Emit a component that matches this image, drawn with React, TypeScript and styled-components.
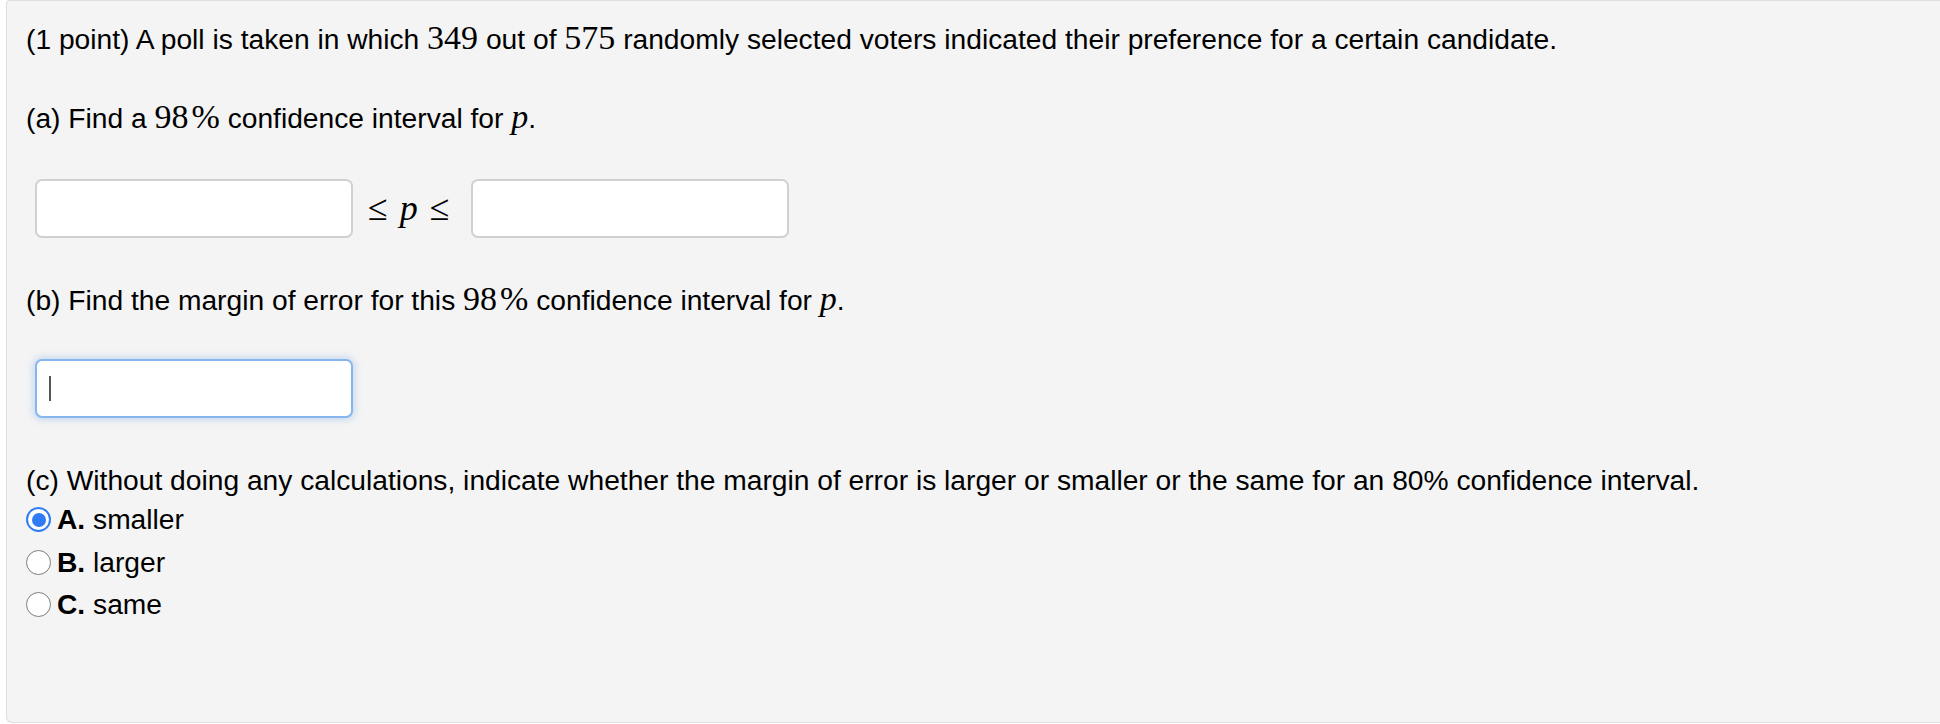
import React from "react";
import styled, { createGlobalStyle } from "styled-components";

const GlobalStyle = createGlobalStyle`
  html, body { margin: 0; padding: 0; background: #ffffff; }
  body { font-family: "Liberation Sans", Arial, Helvetica, sans-serif; color: #000; }
`;

const Page = styled.div`
  padding-left: 6px;
  height: 724px;
  box-sizing: border-box;
  overflow: hidden;
`;

const Panel = styled.div`
  box-sizing: border-box;
  height: 723px;
  background: #f4f4f4;
  border: 1px solid #dedede;
  border-right: none;
  border-radius: 4px 0 0 6px;
  padding: 20px 0 0 19px;
  font-size: 28.2px;
  line-height: 33px;
`;

const Para = styled.div<{ $gap?: number }>`
  margin-bottom: ${(p) => p.$gap ?? 0}px;
  white-space: nowrap;
`;

const Num = styled.span`
  font-family: "Liberation Serif", "Times New Roman", serif;
  font-size: 34px;
  line-height: 33px;
`;

const Pct = styled.span`
  margin-left: 3px;
`;

const Var = styled.span`
  font-family: "Liberation Serif", "Times New Roman", serif;
  font-style: italic;
  font-size: 34px;
  line-height: 33px;
`;

const InputRow = styled.div<{ $gap?: number }>`
  display: flex;
  align-items: center;
  margin-left: 9px;
  margin-bottom: ${(p) => p.$gap ?? 0}px;
`;

const AnswerBox = styled.div<{ $focused?: boolean }>`
  box-sizing: border-box;
  width: 318px;
  height: 59px;
  border-radius: 7px;
  background: #fff;
  border: 2px solid ${(p) => (p.$focused ? "#86b6ec" : "#d0d0d0")};
  box-shadow: ${(p) => (p.$focused ? "0 0 7px 2px rgba(110,165,230,0.35)" : "none")};
  display: flex;
  align-items: center;
  padding-left: 12px;
`;

const Caret = styled.span`
  width: 2px;
  height: 25px;
  background: #555;
`;

const Relation = styled.span`
  font-family: "Liberation Serif", "Times New Roman", serif;
  font-size: 36px;
  padding: 0 21px 0 15px;
  display: flex;
  align-items: center;
  gap: 12px;
`;

const RelVar = styled.span`
  font-style: italic;
`;

const Options = styled.div`
  display: flex;
  flex-direction: column;
`;

const OptionRow = styled.label`
  display: flex;
  align-items: center;
  height: 42.5px;
  gap: 6px;
`;

const Radio = styled.span<{ $checked?: boolean }>`
  box-sizing: border-box;
  width: 25px;
  height: 25px;
  border-radius: 50%;
  background: #fff;
  border: ${(p) => (p.$checked ? "2.5px solid #2f7cf6" : "1.5px solid #7d7d7d")};
  display: flex;
  align-items: center;
  justify-content: center;
  &::after {
    content: "";
    width: 14px;
    height: 14px;
    border-radius: 50%;
    background: ${(p) => (p.$checked ? "#2f7cf6" : "transparent")};
  }
`;

const Letter = styled.b`
  font-weight: 700;
`;

const options = [
  { letter: "A.", text: "smaller", checked: true },
  { letter: "B.", text: "larger", checked: false },
  { letter: "C.", text: "same", checked: false },
];

export default function App() {
  return (
    <>
      <GlobalStyle />
      <Page>
        <Panel>
          <Para $gap={43.5}>
            (1 point) A poll is taken in which <Num>349</Num> out of <Num>575</Num> randomly selected
            voters indicated their preference for a certain candidate.
          </Para>
          <Para $gap={44}>
            (a) Find a <Num>98<Pct>%</Pct></Num> confidence interval for <Var>p</Var>.
          </Para>
          <InputRow $gap={44}>
            <AnswerBox />
            <Relation>
              <span>≤</span>
              <RelVar>p</RelVar>
              <span>≤</span>
            </Relation>
            <AnswerBox />
          </InputRow>
          <Para $gap={42}>
            (b) Find the margin of error for this <Num>98<Pct>%</Pct></Num> confidence interval for{" "}
            <Var>p</Var>.
          </Para>
          <InputRow $gap={46.5}>
            <AnswerBox $focused>
              <Caret />
            </AnswerBox>
          </InputRow>
          <Para $gap={1.5}>
            (c) Without doing any calculations, indicate whether the margin of error is larger or
            smaller or the same for an 80% confidence interval.
          </Para>
          <Options>
            {options.map((o) => (
              <OptionRow key={o.letter}>
                <Radio $checked={o.checked} />
                <span>
                  <Letter>{o.letter}</Letter> {o.text}
                </span>
              </OptionRow>
            ))}
          </Options>
        </Panel>
      </Page>
    </>
  );
}
